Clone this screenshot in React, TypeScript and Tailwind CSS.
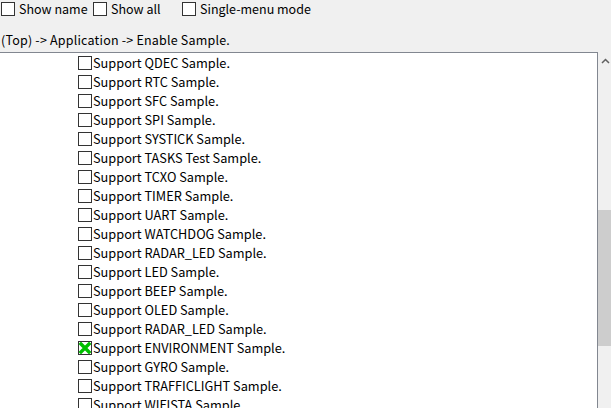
import React from "react";

const items: { label: string; checked?: boolean }[] = [
  { label: "Support QDEC Sample." },
  { label: "Support RTC Sample." },
  { label: "Support SFC Sample." },
  { label: "Support SPI Sample." },
  { label: "Support SYSTICK Sample." },
  { label: "Support TASKS Test Sample." },
  { label: "Support TCXO Sample." },
  { label: "Support TIMER Sample." },
  { label: "Support UART Sample." },
  { label: "Support WATCHDOG Sample." },
  { label: "Support RADAR_LED Sample." },
  { label: "Support LED Sample." },
  { label: "Support BEEP Sample." },
  { label: "Support OLED Sample." },
  { label: "Support RADAR_LED Sample." },
  { label: "Support ENVIRONMENT Sample.", checked: true },
  { label: "Support GYRO Sample." },
  { label: "Support TRAFFICLIGHT Sample." },
  { label: "Support WIFISTA Sample." },
];

function Box({ checked }: { checked?: boolean }) {
  return (
    <div className="w-[14px] h-[14px] border border-[#333] bg-white shrink-0 flex items-center justify-center">
      {checked && (
        <svg width="12" height="12" viewBox="0 0 12 12">
          <path d="M2 2 L10 10 M10 2 L2 10" stroke="#00c000" strokeWidth="3.4" strokeLinecap="square" />
        </svg>
      )}
    </div>
  );
}

export default function App() {
  return (
    <div
      className="w-[611px] h-[408px] bg-[#f0f0f0] overflow-hidden text-[12.5px] text-black flex flex-col"
      style={{ fontFamily: '"Noto Sans CJK SC", "Noto Sans", sans-serif' }}
    >
      <div className="flex items-center h-[16px] pt-[1px] leading-[14px]">
        <div className="ml-[1px] w-[92px] flex items-center">
          <Box />
          <span className="ml-[4px]">Show name</span>
        </div>
        <div className="w-[89px] flex items-center">
          <Box />
          <span className="ml-[4px]">Show all</span>
        </div>
        <div className="flex items-center">
          <Box />
          <span className="ml-[4px]">Single-menu mode</span>
        </div>
      </div>
      <div className="h-[36px] flex items-center pl-[1px] pt-[13px] tracking-[0.2px]">(Top) -&gt; Application -&gt; Enable Sample.</div>
      <div className="flex flex-1 min-h-0">
        <div className="w-[598px] border-t border-r border-[#828790] bg-white pt-[3px] overflow-hidden">
          {items.map((it, i) => (
            <div key={i} className="h-[19px] flex items-start pl-[78px] leading-[14px] text-[12.75px]">
              <Box checked={it.checked} />
              <span className="ml-[1px] whitespace-nowrap">{it.label}</span>
            </div>
          ))}
        </div>
        <div className="w-[13px] relative bg-[#f0f0f0]">
          <svg className="absolute left-[3px] top-[6px]" width="9" height="6" viewBox="0 0 9 6">
            <path d="M1 5 L4.5 1.5 L8 5" stroke="#606060" strokeWidth="1.5" fill="none" />
          </svg>
          <div className="absolute left-0 right-0 top-[158px] h-[136px] bg-[#cdcdcd]" />
        </div>
      </div>
    </div>
  );
}
